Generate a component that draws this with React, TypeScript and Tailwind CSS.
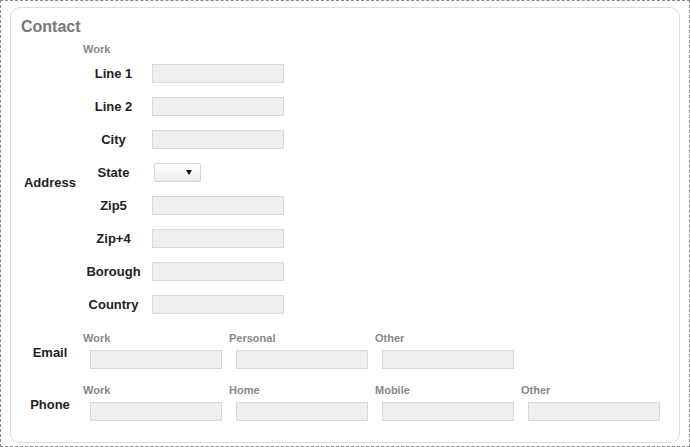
const addressRows = ["Line 1", "Line 2", "City", "State", "Zip5", "Zip+4", "Borough", "Country"];

const TextBox = ({ className = "" }: { className?: string }) => (
    <div className={`h-[19px] w-[132px] border border-[#d9d9d9] bg-[#eeeeee] ${className}`} />
);

const SelectBox = () => (
    <div className="ml-[10px] flex h-[19px] w-[47px] items-center justify-end rounded-[2px] border border-[#d4d4d4] bg-gradient-to-b from-white to-[#ececec] pr-[8px]">
        <svg width="6" height="5" viewBox="0 0 6 5">
            <path d="M0 0h6L3 5z" fill="#111" />
        </svg>
    </div>
);

const MultiRow = ({ title, fields, className = "" }: { title: string; fields: string[]; className?: string }) => (
    <div className={`flex items-center ${className}`}>
        <div className="w-[72px] pl-[6px] pt-[4px] text-center text-[13px] font-bold text-[#222]">{title}</div>
        <div className="flex">
            {fields.map((f) => (
                <div key={f} className="w-[146px]">
                    <div className="text-[11px] font-bold leading-[13px] text-[#888]">{f}</div>
                    <TextBox className="ml-[7px] mt-[5px]" />
                </div>
            ))}
        </div>
    </div>
);

export default function App() {
    return (
        <div className="h-[447px] w-[690px] border border-dashed border-[#888] px-[9px] pb-[3px] pt-[6px] font-['Liberation_Sans',Arial,sans-serif]">
            <div className="h-[436px] rounded-[10px] border border-[#dddddd] bg-white pt-[9px]">
                <h2 className="pl-[10px] text-[16px] font-bold leading-[19px] text-[#777]">Contact</h2>

                {/* address */}
                <div className="mt-[7px] flex items-center">
                    <div className="w-[72px] pl-[6px] pt-[2px] text-center text-[13px] font-bold text-[#222]">Address</div>
                    <div>
                        <div className="text-[11px] font-bold leading-[13px] text-[#888]">Work</div>
                        <div className="mt-[1px]">
                            {addressRows.map((r) => (
                                <div key={r} className="flex h-[33px] items-center">
                                    <div className="w-[61px] text-center text-[13px] font-bold text-[#222]">{r}</div>
                                    {r === "State" ? <SelectBox /> : <TextBox className="ml-[8px]" />}
                                </div>
                            ))}
                        </div>
                    </div>
                </div>

                <MultiRow title="Email" fields={["Work", "Personal", "Other"]} className="mt-[11px]" />
                <MultiRow title="Phone" fields={["Work", "Home", "Mobile", "Other"]} className="mt-[15px]" />
            </div>
        </div>
    );
}
